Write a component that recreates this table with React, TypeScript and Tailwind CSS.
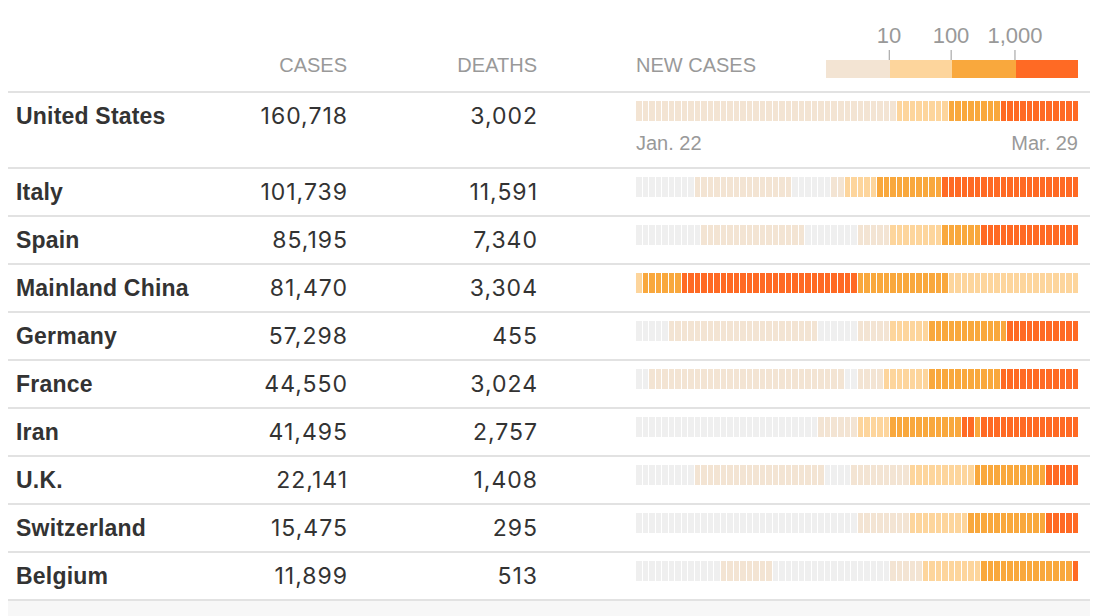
import React from "react";

type Run = [number, number];

type Country = {
    name: string;
    cases: string;
    deaths: string;
    runs: Run[];
};

const LEVEL_BG = ["bg-[#efefef]", "bg-[#f3e4d3]", "bg-[#fdd59c]", "bg-[#f9a83d]", "bg-[#ff6a24]"];

const countries: Country[] = [
    { name: "United States", cases: "160,718", deaths: "3,002", runs: [[1, 40], [2, 8], [3, 8], [4, 12]] },
    { name: "Italy", cases: "101,739", deaths: "11,591", runs: [[0, 9], [1, 15], [0, 6], [1, 2], [2, 5], [3, 10], [4, 21]] },
    { name: "Spain", cases: "85,195", deaths: "7,340", runs: [[0, 10], [1, 16], [0, 8], [1, 5], [2, 8], [3, 6], [4, 15]] },
    { name: "Mainland China", cases: "81,470", deaths: "3,304", runs: [[2, 1], [3, 6], [4, 27], [3, 14], [2, 20]] },
    { name: "Germany", cases: "57,298", deaths: "455", runs: [[0, 5], [1, 23], [0, 6], [1, 5], [2, 6], [3, 12], [4, 11]] },
    { name: "France", cases: "44,550", deaths: "3,024", runs: [[0, 2], [1, 30], [0, 2], [1, 4], [2, 7], [3, 11], [4, 12]] },
    { name: "Iran", cases: "41,495", deaths: "2,757", runs: [[0, 28], [1, 6], [2, 5], [3, 11], [4, 2], [3, 1], [4, 15]] },
    { name: "U.K.", cases: "22,141", deaths: "1,408", runs: [[0, 9], [1, 20], [0, 4], [1, 9], [2, 10], [3, 11], [4, 5]] },
    { name: "Switzerland", cases: "15,475", deaths: "295", runs: [[0, 34], [1, 8], [2, 9], [3, 12], [4, 5]] },
    { name: "Belgium", cases: "11,899", deaths: "513", runs: [[0, 13], [1, 8], [0, 18], [1, 5], [2, 9], [3, 14], [4, 1]] },
];

function expand(runs: Run[]): number[] {
    const out: number[] = [];
    runs.forEach(([lvl, n]) => {
        for (let i = 0; i < n; i++) out.push(lvl);
    });
    return out;
}

function DayBars({ runs }: { runs: Run[] }) {
    const days = expand(runs);
    return (
        <div className="flex h-[20px] w-[442px] gap-px">
            {days.map((lvl, i) => (
                <div key={i} className={["h-full flex-1", LEVEL_BG[lvl]].join(" ")} />
            ))}
        </div>
    );
}

function Legend() {
    return (
        <div className="relative h-[80px] w-[252px]">
            {[
                { label: "10", left: 63 },
                { label: "100", left: 125 },
                { label: "1,000", left: 189 },
            ].map((t) => (
                <div key={t.label} className="absolute top-[24px] flex -translate-x-1/2 flex-col items-center" style={{ left: t.left }}>
                    <span className="text-[22px] leading-[28px] text-[#999]">{t.label}</span>
                    <span className="h-[10px] w-px bg-[#999]" />
                </div>
            ))}
            <div className="absolute bottom-0 left-0 flex h-[18px] w-full">
                <div className="w-[64px] bg-[#f3e4d3]" />
                <div className="w-[62px] bg-[#fdd59c]" />
                <div className="w-[64px] bg-[#f9a83d]" />
                <div className="flex-1 bg-[#ff6a24]" />
            </div>
        </div>
    );
}

export default function App() {
    return (
        <div className="min-h-[616px] bg-white px-2 font-['Liberation_Sans',Arial,sans-serif]">
            {/* header */}
            <div className="flex h-[93px] items-end border-b-2 border-[#e2e2e2] pb-[14px] pl-2">
                <div className="w-[211px]" />
                <div className="w-[120px] text-right text-[20px] leading-[24px] text-[#999]">CASES</div>
                <div className="w-[190px] text-right text-[20px] leading-[24px] text-[#999]">DEATHS</div>
                <div className="ml-[99px] flex w-[442px] items-end justify-between">
                    <span className="text-[20px] leading-[24px] text-[#999]">NEW CASES</span>
                    <div className="-mb-[1px]">
                        <Legend />
                    </div>
                </div>
            </div>

            {countries.map((c, idx) => (
                <div
                    key={c.name}
                    className={[
                        "flex items-start border-b-2 border-[#e2e2e2] pl-2",
                        idx === 0 ? "h-[76px]" : "h-[48px]",
                    ].join(" ")}
                >
                    <div className="w-[211px] pt-[9px] text-[23px] font-bold leading-[28px] tracking-[0.2px] text-[#333]">
                        {c.name}
                    </div>
                    <div className="w-[120px] pt-[9px] text-right font-['Inter',sans-serif] text-[23px] leading-[28px] tracking-[1px] text-[#333]">
                        <span className="-mr-[1px]">{c.cases}</span>
                    </div>
                    <div className="w-[190px] pt-[9px] text-right font-['Inter',sans-serif] text-[23px] leading-[28px] tracking-[1px] text-[#333]">
                        <span className="-mr-[1px]">{c.deaths}</span>
                    </div>
                    <div className="ml-[99px] pt-[8px]">
                        <DayBars runs={c.runs} />
                        <div className={idx === 0 ? "mt-[10px] flex justify-between text-[20px] leading-[24px] text-[#999]" : "hidden"}>
                            <span>Jan. 22</span>
                            <span>Mar. 29</span>
                        </div>
                    </div>
                </div>
            ))}

            <div className="h-[20px] bg-[#f7f7f7]" />
        </div>
    );
}
